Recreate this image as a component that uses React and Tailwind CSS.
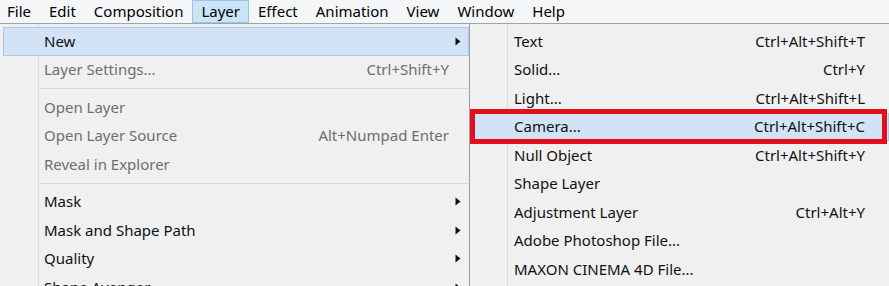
const font = { fontFamily: '"Noto Sans", "Open Sans", sans-serif' };

const menus = ['File', 'Edit', 'Composition', 'Layer', 'Effect', 'Animation', 'View', 'Window', 'Help'];

const leftItems = [
  { label: 'New', arrow: true, active: true },
  { label: 'Layer Settings...', shortcut: 'Ctrl+Shift+Y', disabled: true },
  { sep: true },
  { label: 'Open Layer', disabled: true },
  { label: 'Open Layer Source', shortcut: 'Alt+Numpad Enter', disabled: true },
  { label: 'Reveal in Explorer', disabled: true },
  { sep: true },
  { label: 'Mask', arrow: true },
  { label: 'Mask and Shape Path', arrow: true },
  { label: 'Quality', arrow: true },
  { label: 'Shape Avenger', arrow: true },
];

const rightItems = [
  { label: 'Text', shortcut: 'Ctrl+Alt+Shift+T' },
  { label: 'Solid...', shortcut: 'Ctrl+Y' },
  { label: 'Light...', shortcut: 'Ctrl+Alt+Shift+L' },
  { label: 'Camera...', shortcut: 'Ctrl+Alt+Shift+C', active: true, marked: true },
  { label: 'Null Object', shortcut: 'Ctrl+Alt+Shift+Y' },
  { label: 'Shape Layer' },
  { label: 'Adjustment Layer', shortcut: 'Ctrl+Alt+Y' },
  { label: 'Adobe Photoshop File...' },
  { label: 'MAXON CINEMA 4D File...' },
];

function Arrow() {
  return (
    <svg width="6" height="9" viewBox="0 0 6 9" className="shrink-0">
      <path d="M0.5 0.5 L5.5 4.5 L0.5 8.5 Z" fill="#111" />
    </svg>
  );
}

function Row({ item, gutter }) {
  if (item.sep) {
    return (
      <div className="flex h-[9px] items-center">
        <div className="ml-[39px] h-px flex-1 bg-[#d7d7d7]" />
      </div>
    );
  }
  return (
    <div className="relative flex h-[28.5px] items-center">
      {item.active && (
        <div className="absolute inset-y-0 left-[3px] right-0 border border-[#a9c9ec] bg-[#d2e3f5]" />
      )}
      {item.marked && (
        <div className="absolute -top-[4px] -bottom-[3px] left-0 right-[2px] border-[5px] border-[#e2101c]" />
      )}
      <div className={`relative flex flex-1 items-center ${gutter} ${item.disabled ? 'text-[#6e6e6e]' : 'text-[#111]'}`}>
        <span className="flex-1 whitespace-nowrap">{item.label}</span>
        {item.shortcut && <span className="whitespace-nowrap">{item.shortcut}</span>}
        {item.arrow && <span className="absolute right-[8px]"><Arrow /></span>}
      </div>
    </div>
  );
}

export default function App() {
  return (
    <div className="h-[286px] w-[889px] overflow-hidden bg-[#f0f0f0] text-[15px] leading-none" style={font}>
      <div className="flex h-[24px] items-stretch border-b border-[#a3a3a3] bg-[#f5f6f7]">
        <div className="-ml-[2px] flex items-stretch">
          {menus.map((m) => (
            <div
              key={m}
              className={`flex items-center px-[8px] ${m === 'Layer' ? 'border border-[#98c6ee] bg-[#cce4f7]' : 'border border-transparent'}`}
            >
              {m}
            </div>
          ))}
        </div>
      </div>
      <div className="flex">
        <div className="relative w-[470px] border-r border-[#a0a0a0] pt-[3px] pb-4">
          <div className="absolute inset-y-0 left-[38px] w-px bg-[#dcdcdc]" />
          {leftItems.map((it, i) => (
            <Row key={i} item={it} gutter="pl-[44px] pr-[20px]" />
          ))}
        </div>
        <div className="relative flex-1 pt-[3px]">
          <div className="absolute inset-y-0 left-[37px] w-px bg-[#dcdcdc]" />
          {rightItems.map((it, i) => (
            <Row key={i} item={it} gutter="pl-[44px] pr-[24px]" />
          ))}
        </div>
      </div>
    </div>
  );
}
